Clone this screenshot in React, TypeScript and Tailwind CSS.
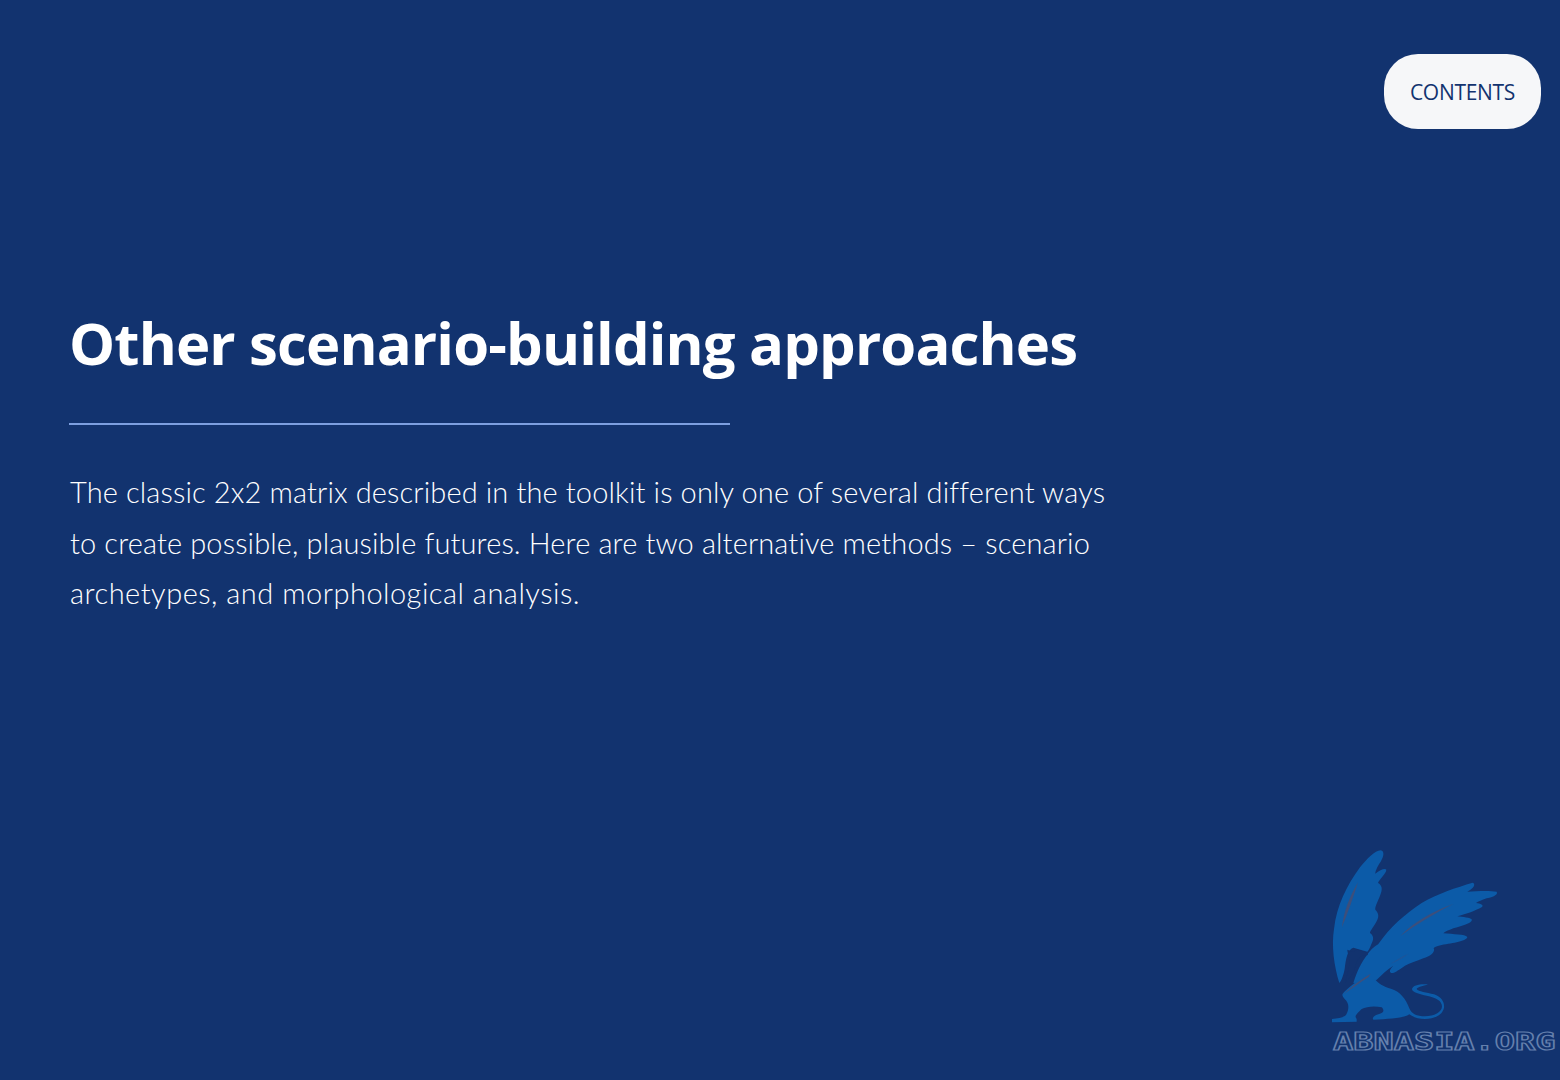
export default function App() {
  return (
    <div className="flex h-[1080px] w-[1560px] flex-col overflow-hidden bg-[#12336f] font-['Open_Sans',sans-serif]">
      <div className="flex justify-end pt-[54px] pr-[19px]">
        <div className="flex h-[75px] w-[157px] items-center justify-center rounded-[34px] bg-[#f6f7f9] pt-[2px] text-[21px] tracking-[-0.3px] text-[#12336f]">
          CONTENTS
        </div>
      </div>
      <div className="pl-[70px] pt-[171px]">
        <h1 className="-ml-[1px] h-[86px] text-[58px] leading-[86px] font-bold tracking-[-0.85px] whitespace-nowrap text-white">
          Other scenario-building approaches
        </h1>
        <div className="-ml-px mt-[37px] h-[2px] w-[661px] bg-[#7d9fe0]" />
        <p className="mt-[42px] font-['Lato',sans-serif] text-[29px] leading-[50.5px] font-light tracking-[0.13px] whitespace-nowrap text-white [font-variant-ligatures:none]">
          The classic 2x2 matrix described in the toolkit is only one of several different ways
          <br />
          to create possible, plausible futures. Here are two alternative methods – scenario
          <br />
          <span className="tracking-[0.5px]">archetypes, and morphological analysis.</span>
        </p>
      </div>
      <div className="mt-auto flex flex-col items-end pr-[7px] pb-[27px]">
        <div className="flex w-[220px] justify-start">
          <svg width="172" height="176" viewBox="60 50 516 528" className="-ml-[3px] block">
            <path
              fill="#0c5ba8"
              d="M88 452 C72 400 64 340 72 290 C80 220 110 160 150 105 C170 80 195 55 212 54 C224 56 222 72 212 88 C200 105 196 118 196 124 C210 112 226 106 229 112 C228 125 208 140 204 152 C212 156 218 165 214 178 C208 200 194 222 196 232 C204 240 208 250 202 262 C194 280 180 295 180 302 C188 308 192 316 188 326 C180 345 178 352 172 358 L130 346 C112 352 108 378 104 410 C100 430 94 446 88 452 Z"
            />
            <path
              fill="#0c5ba8"
              d="M130 452 C140 420 150 395 178 358 C190 345 198 340 205 335 C240 285 285 245 335 212 C380 185 440 165 488 151 C497 154 494 166 472 178 C500 176 540 174 560 178 C564 186 555 192 530 198 C515 203 505 208 498 212 C512 214 522 218 516 224 C495 236 465 246 442 252 C458 254 482 256 486 262 C484 274 455 280 430 288 C415 294 405 298 400 303 C430 306 465 306 472 314 C470 326 430 332 395 338 C378 342 368 346 372 350 C375 360 360 372 340 378 C320 386 300 392 285 400 C270 410 252 424 244 422 C236 418 240 410 250 400 C230 412 215 428 200 442 C190 450 180 455 170 450 Z"
            />
            <path
              fill="#0c5ba8"
              d="M98 484 C115 465 140 445 178 424 L196 442 C205 452 218 462 245 470 C270 478 288 500 298 528 C305 545 320 552 345 552 C372 552 396 540 396 522 C396 505 378 496 350 490 C330 486 306 480 306 470 C308 458 330 454 354 456 C340 462 322 464 320 470 C325 478 350 480 372 486 C395 494 404 510 402 526 C398 548 372 560 345 560 C325 560 308 554 298 546 C285 556 240 560 190 562 C186 558 190 550 205 546 C220 542 225 535 215 525 C195 520 170 522 155 530 C140 545 132 552 140 560 L140 568 L66 570 L66 560 C85 558 100 556 108 548 C118 530 118 512 104 500 C98 494 96 488 98 484 Z"
            />
            <path fill="#12336f" d="M112 352 L128 358 L142 352 L170 360 L174 368 L152 372 C140 385 136 400 134 412 C128 425 118 440 106 450 C112 425 120 400 118 378 C116 368 112 360 112 352 Z" />
            <path fill="#3c4f7c" d="M96 285 C100 240 120 190 144 150 C130 195 112 245 96 285 Z" />
            <path fill="#3c4f7c" d="M270 312 C310 270 370 235 430 215 C380 240 320 275 270 312 Z" />
            <path fill="#3c4f7c" d="M100 486 C125 462 155 440 182 424 L176 434 C150 450 125 470 100 486 Z" />
            <path fill="#1f5598" d="M240 395 C255 385 275 372 296 364 C280 376 260 388 240 395 Z" />
          </svg>
        </div>
        <div className="mt-[6px] h-[22px] w-[220px] origin-left scale-x-[1.4] font-['DejaVu_Sans_Mono',monospace] text-[24px] leading-[22px] font-bold whitespace-nowrap text-transparent [-webkit-text-stroke:1.2px_#6580ad]">
          ABNASIA.ORG
        </div>
      </div>
    </div>
  );
}
